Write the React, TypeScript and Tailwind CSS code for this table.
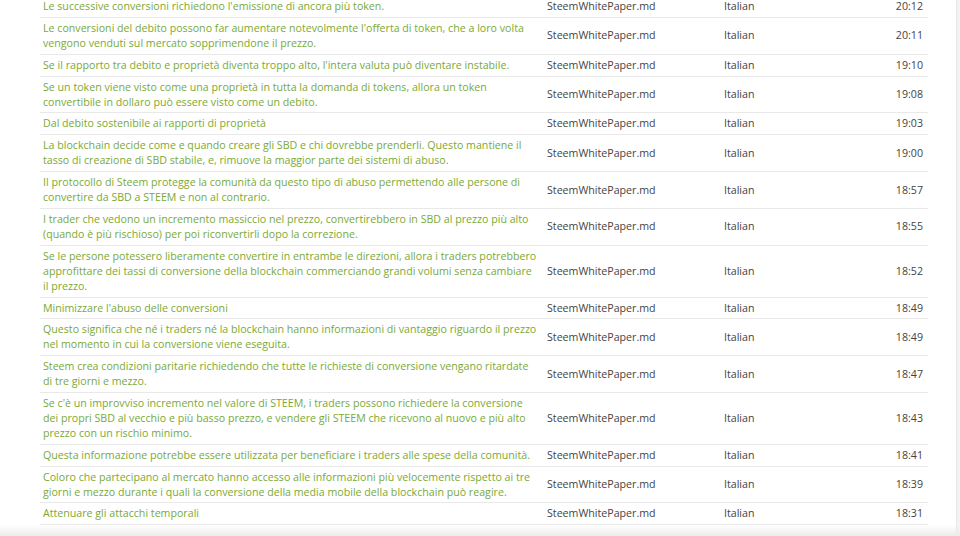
import React from "react";

const rows: [string, string][] = [
  ["Le successive conversioni richiedono l'emissione di ancora più token.", "20:12"],
  ["Le conversioni del debito possono far aumentare notevolmente l'offerta di token, che a loro volta vengono venduti sul mercato sopprimendone il prezzo.", "20:11"],
  ["Se il rapporto tra debito e proprietà diventa troppo alto, l'intera valuta può diventare instabile.", "19:10"],
  ["Se un token viene visto come una proprietà in tutta la domanda di tokens, allora un token convertibile in dollaro può essere visto come un debito.", "19:08"],
  ["Dal debito sostenibile ai rapporti di proprietà", "19:03"],
  ["La blockchain decide come e quando creare gli SBD e chi dovrebbe prenderli. Questo mantiene il tasso di creazione di SBD stabile, e, rimuove la maggior parte dei sistemi di abuso.", "19:00"],
  ["Il protocollo di Steem protegge la comunità da questo tipo di abuso permettendo alle persone di convertire da SBD a STEEM e non al contrario.", "18:57"],
  ["I trader che vedono un incremento massiccio nel prezzo, convertirebbero in SBD al prezzo più alto (quando è più rischioso) per poi riconvertirli dopo la correzione.", "18:55"],
  ["Se le persone potessero liberamente convertire in entrambe le direzioni, allora i traders potrebbero approfittare dei tassi di conversione della blockchain commerciando grandi volumi senza cambiare il prezzo.", "18:52"],
  ["Minimizzare l'abuso delle conversioni", "18:49"],
  ["Questo significa che né i traders né la blockchain hanno informazioni di vantaggio riguardo il prezzo nel momento in cui la conversione viene eseguita.", "18:49"],
  ["Steem crea condizioni paritarie richiedendo che tutte le richieste di conversione vengano ritardate di tre giorni e mezzo.", "18:47"],
  ["Se c'è un improvviso incremento nel valore di STEEM, i traders possono richiedere la conversione dei propri SBD al vecchio e più basso prezzo, e vendere gli STEEM che ricevono al nuovo e più alto prezzo con un rischio minimo.", "18:43"],
  ["Questa informazione potrebbe essere utilizzata per beneficiare i traders alle spese della comunità.", "18:41"],
  ["Coloro che partecipano al mercato hanno accesso alle informazioni più velocemente rispetto ai tre giorni e mezzo durante i quali la conversione della media mobile della blockchain può reagire.", "18:39"],
  ["Attenuare gli attacchi temporali", "18:31"],
];

export default function App() {
  return (
    <div className="relative flex h-[536px] w-[960px] overflow-hidden bg-white font-['Open_Sans',sans-serif] text-[10.65px] leading-[14.9px]">
      <div className="flex-1 pl-[40px] pr-[28px]">
        <table className="-mt-[4px] w-full table-fixed border-collapse">
          <colgroup>
            <col className="w-[504px]" />
            <col className="w-[177px]" />
            <col />
            <col className="w-[80px]" />
          </colgroup>
          <tbody>
            {rows.map(([text, time], i) => (
              <tr key={i} className="border-b border-[#e9e9e9]">
                <td className="py-[3px] pl-[3px] pr-[6px] align-middle text-[#7aa935]">
                  <a href="#" className="hover:underline">{text}</a>
                </td>
                <td className="py-[3px] pl-[3px] align-middle text-[#444]">SteemWhitePaper.md</td>
                <td className="py-[3px] pl-[3px] align-middle text-[#444]">Italian</td>
                <td className="py-[3px] pr-[5px] text-right align-middle text-[#444]">{time}</td>
              </tr>
            ))}
          </tbody>
        </table>
      </div>
      <div className="w-[4px] border-l border-[#e6e6e6] bg-[#f3f3f3]" />
      <div className="pointer-events-none absolute bottom-0 left-0 right-0 h-[11px] bg-gradient-to-b from-transparent to-[#ececec]" />
    </div>
  );
}
